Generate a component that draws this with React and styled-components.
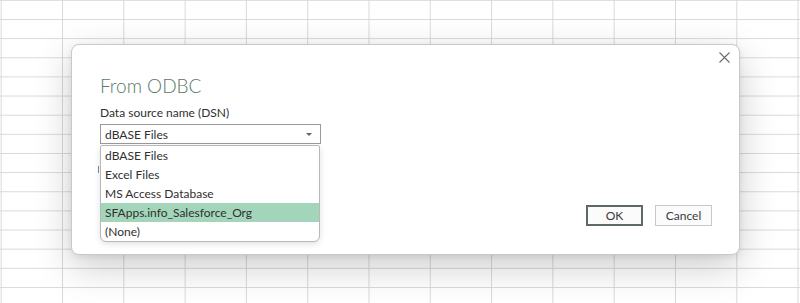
import React from 'react';
import styled, { createGlobalStyle } from 'styled-components';

const GlobalStyle = createGlobalStyle`
  html, body {
    margin: 0;
    padding: 0;
    background: #ffffff;
  }
  body {
    font-family: 'Segoe UI', Lato, 'Open Sans', 'Liberation Sans', sans-serif;
  }
`;

const sources = [
  'dBASE Files',
  'Excel Files',
  'MS Access Database',
  'SFApps.info_Salesforce_Org',
  '(None)',
];

const App = () => {
  const selected = 'dBASE Files';
  const highlighted = 'SFApps.info_Salesforce_Org';

  return (
    <>
      <GlobalStyle />
      <Sheet>
        <Dialog>
          <CloseButton aria-label="Close">
            <svg width="11" height="11" viewBox="0 0 11 11">
              <path d="M0.5 0.5 L10.5 10.5 M10.5 0.5 L0.5 10.5" stroke="#6b6b6b" strokeWidth="1.1" fill="none" />
            </svg>
          </CloseButton>
          <Body>
            <Title>From ODBC</Title>
            <Label>Data source name (DSN)</Label>
            <SelectWrap>
              <Select>
                <span>{selected}</span>
                <Arrow />
              </Select>
              <Covered />
              <List>
                {sources.map(s => (
                  <Item key={s} active={s === highlighted}>{s}</Item>
                ))}
              </List>
            </SelectWrap>
          </Body>
          <Footer>
            <Button primary>OK</Button>
            <Button>Cancel</Button>
          </Footer>
        </Dialog>
      </Sheet>
    </>
  );
};

const Sheet = styled.div`
  width: 800px;
  height: 303px;
  box-sizing: border-box;
  padding: 44px 0 0 71px;
  overflow: hidden;
  background-color: #ffffff;
  background-image:
    linear-gradient(to right, #d9d9d9 1px, transparent 1px),
    linear-gradient(to bottom, #d9d9d9 1px, transparent 1px);
  background-size: 61.3px 19.15px, 61.3px 19.15px;
  background-position: 62px 0, 0 19px;
`;

const Dialog = styled.div`
  position: relative;
  width: 669px;
  height: 211px;
  box-sizing: border-box;
  background: #ffffff;
  border: 1px solid #c9c9c9;
  border-radius: 8px;
  box-shadow: 0 12px 38px rgba(0, 0, 0, 0.2), 0 2px 6px rgba(0, 0, 0, 0.08);
  display: flex;
  flex-direction: column;
  justify-content: space-between;
`;

const CloseButton = styled.div`
  position: absolute;
  top: 7px;
  right: 9px;
  width: 11px;
  height: 11px;
  display: flex;
`;

const Body = styled.div`
  padding: 28px 0 0 28px;
  display: flex;
  flex-direction: column;
`;

const Title = styled.div`
  font-size: 19px;
  font-weight: 300;
  color: #57796a;
  line-height: 25px;
`;

const Label = styled.div`
  margin-top: 7px;
  font-size: 12px;
  color: #303030;
  line-height: 16px;
`;

const SelectWrap = styled.div`
  position: relative;
  margin-top: 3px;
  width: 221px;
`;

const Select = styled.div`
  height: 20px;
  box-sizing: border-box;
  border: 1px solid #9a9a9a;
  padding: 0 8px 0 4px;
  font-size: 12px;
  color: #303030;
  display: flex;
  align-items: center;
  justify-content: space-between;
  background: #fff;
`;

const Arrow = styled.span`
  width: 0;
  height: 0;
  border-left: 3px solid transparent;
  border-right: 3px solid transparent;
  border-top: 3px solid #666;
`;

const Covered = styled.div`
  margin-top: 22px;
  margin-left: -2px;
  width: 4px;
  height: 7px;
  border-left: 1px solid #8a8a8a;
`;

const List = styled.div`
  position: absolute;
  top: 21px;
  left: 0;
  width: 220px;
  box-sizing: border-box;
  background: #fff;
  border: 1px solid #b8b8b8;
  border-radius: 2px 2px 6px 6px;
  box-shadow: 0 2px 6px rgba(0, 0, 0, 0.12);
  display: flex;
  flex-direction: column;
  overflow: hidden;
`;

const Item = styled.div`
  height: 19px;
  line-height: 19px;
  padding-left: 4px;
  font-size: 12px;
  color: #303030;
  background: ${({ active }) => (active ? '#a3d5ba' : 'transparent')};
`;

const Footer = styled.div`
  display: flex;
  justify-content: flex-end;
  gap: 12px;
  padding: 0 27px 28px 0;
`;

const Button = styled.div`
  width: 57px;
  height: 21px;
  box-sizing: border-box;
  border: ${({ primary }) => (primary ? '2px solid #5d6b64' : '1px solid #c8c8c8')};
  background: #fbfbfb;
  font-size: 12px;
  color: #3a3a3a;
  display: flex;
  align-items: center;
  justify-content: center;
`;

export default App;
